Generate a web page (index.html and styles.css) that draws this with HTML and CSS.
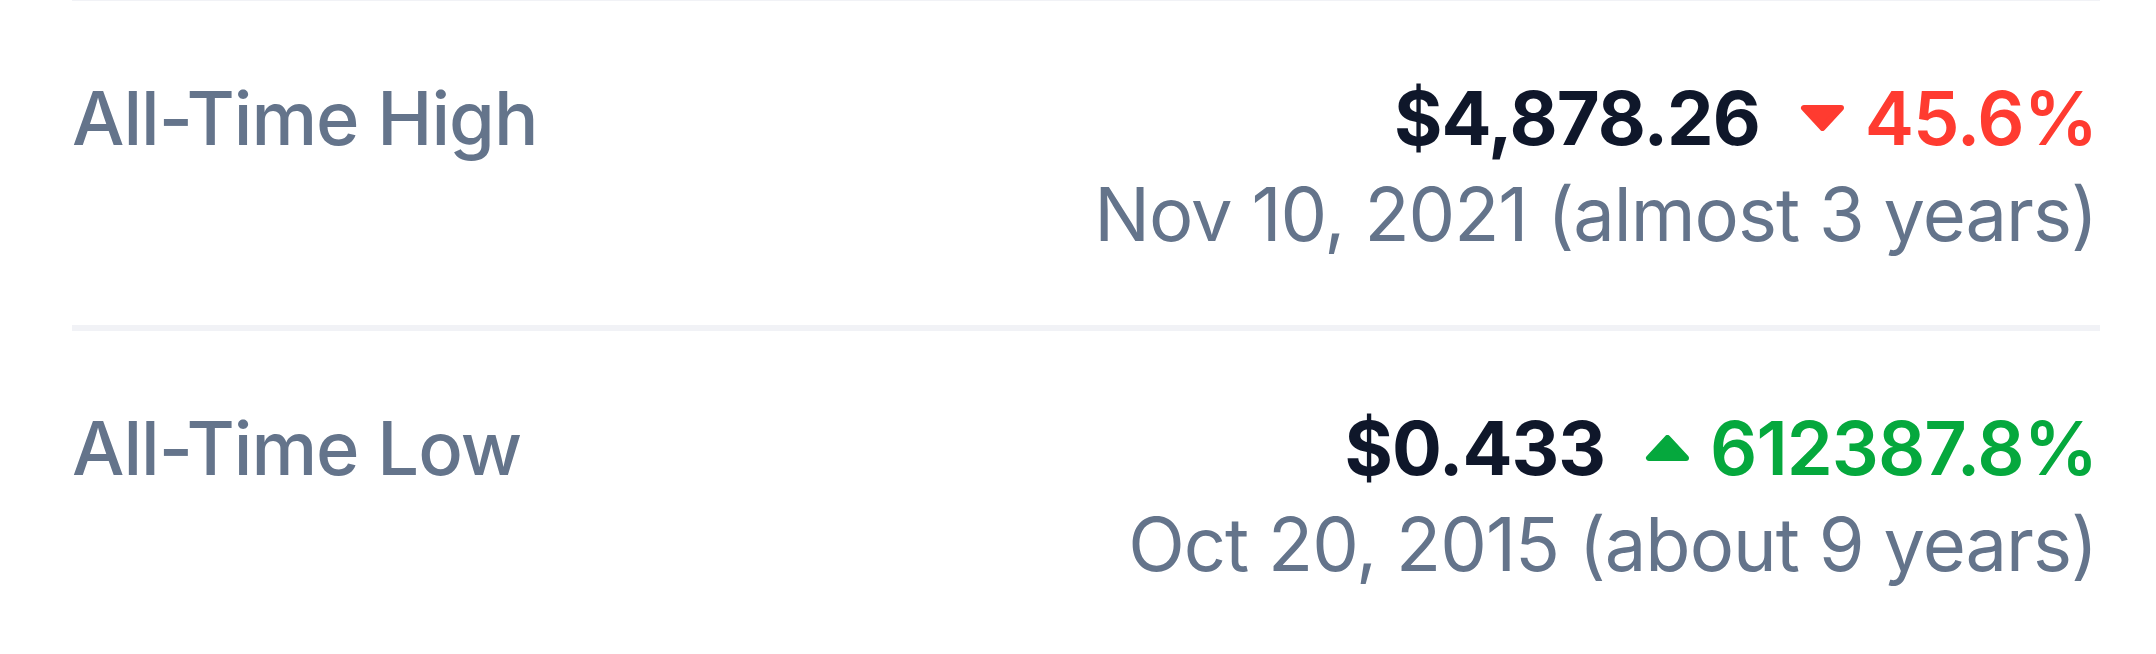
FILE: index.html
```html
<!DOCTYPE html>
<html lang="en">
<head>
<meta charset="utf-8">
<title>All-Time High / Low</title>
<link rel="stylesheet" href="styles.css">
</head>
<body>
<div class="stats">
  <div class="row">
    <div class="label">All-Time High</div>
    <div class="values">
      <div class="line">
        <span class="price">$4,878.26</span>
        <span class="change down">
          <svg class="tri" viewBox="0 0 45 26" width="45" height="26"><polygon points="4,3 41,3 22.5,23"/></svg>
          45.6%
        </span>
      </div>
      <div class="date">Nov 10, 2021 (almost 3 years)</div>
    </div>
  </div>
  <div class="row">
    <div class="label">All-Time Low</div>
    <div class="values">
      <div class="line">
        <span class="price">$0.433</span>
        <span class="change up">
          <svg class="tri" viewBox="0 0 45 26" width="45" height="26"><polygon points="4,23 41,23 22.5,3"/></svg>
          612387.8%
        </span>
      </div>
      <div class="date">Oct 20, 2015 (about 9 years)</div>
    </div>
  </div>
</div>
</body>
</html>
```
FILE: styles.css
```css
html, body {
  margin: 0;
  padding: 0;
  background: #ffffff;
}
body {
  font-family: Inter, "Noto Sans", sans-serif;
  font-size: 74px;
  line-height: 96px;
  letter-spacing: -1px;
  color: #64748b;
}
.stats {
  margin: 0 56px 0 72px;
  border-top: 1px solid #f1f2f6;
}
.row {
  display: flex;
  justify-content: space-between;
  align-items: flex-start;
  padding: 69px 0 63px;
  border-bottom: 6px solid #f1f2f6;
}
.label {
  font-weight: 500;
  color: #64748b;
}
.values {
  display: flex;
  flex-direction: column;
  align-items: flex-end;
  padding-right: 3px;
}
.line {
  display: flex;
  align-items: center;
}
.price {
  font-weight: 700;
  color: #0f172a;
}
.change {
  display: flex;
  align-items: center;
  font-weight: 600;
  margin-left: 40px;
}
.change .tri {
  margin-right: 20px;
  display: block;
}
.change.down { color: #ff3b30; }
.change.down .tri polygon { fill: #ff3b30; stroke: #ff3b30; stroke-width: 6; stroke-linejoin: round; }
.change.up { color: #05a83d; }
.change.up .tri polygon { fill: #05a83d; stroke: #05a83d; stroke-width: 6; stroke-linejoin: round; }
.date {
  font-weight: 400;
  color: #64748b;
}
```
